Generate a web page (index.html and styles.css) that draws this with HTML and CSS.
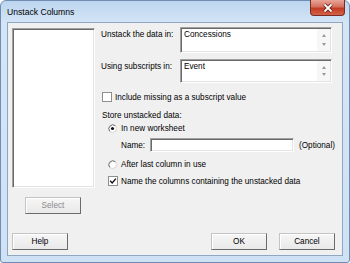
FILE: index.html
```html
<!DOCTYPE html>
<html lang="en">
  <head>
    <meta charset="UTF-8" />
    <meta name="viewport" content="width=device-width, initial-scale=1" />
    <title>Unstack Columns</title>
    <link rel="stylesheet" href="styles.css">
  </head>
  <body>
    <div class="window">
      <div class="titleBar">
        <span class="title">Unstack Columns</span>
        <span class="closeBtn">
          <svg width="12" height="10" viewBox="0 0 12 10">
            <path d="M2.5 1.5 L9.5 8.5 M9.5 1.5 L2.5 8.5" stroke="#5b1d14" stroke-width="3.4" fill="none" />
            <path d="M2.5 1.5 L9.5 8.5 M9.5 1.5 L2.5 8.5" stroke="#fff" stroke-width="1.8" fill="none" />
          </svg>
        </span>
      </div>

      <div class="client">
        <!-- left: column list -->
        <div class="leftPane">
          <div class="listBox"></div>
          <button class="btn selectBtn" type="button">Select</button>
        </div>

        <!-- right: options -->
        <div class="rightPane">
          <div class="fieldRow first">
            <span class="fieldLabel">Unstack the data in:</span>
            <div class="textArea tall">
              <span class="value">Concessions</span>
              <span class="spin"><i class="up"></i><i class="down"></i></span>
            </div>
          </div>

          <div class="fieldRow second">
            <span class="fieldLabel">Using subscripts in:</span>
            <div class="textArea">
              <span class="value">Event</span>
              <span class="spin"><i class="up"></i><i class="down"></i></span>
            </div>
          </div>

          <div class="optRow checkRow">
            <span class="checkBox"></span>
            <span>Include missing as a subscript value</span>
          </div>

          <div class="groupLabel">Store unstacked data:</div>

          <div class="optRow radioRow">
            <svg class="radio" width="9" height="9" viewBox="0 0 9 9">
              <circle cx="4.5" cy="4.5" r="4" fill="#fff" stroke="#d4d4d4" />
              <path d="M1.7 7.3 A4 4 0 0 1 7.3 1.7" stroke="#707070" fill="none" />
              <circle cx="4.5" cy="4.5" r="1.6" fill="#111" />
            </svg>
            <span>In new worksheet</span>
          </div>

          <div class="nameRow">
            <span class="nameLabel">Name:</span>
            <span class="nameBox"></span>
            <span class="optional">(Optional)</span>
          </div>

          <div class="optRow radioRow second">
            <svg class="radio" width="9" height="9" viewBox="0 0 9 9">
              <circle cx="4.5" cy="4.5" r="4" fill="#fff" stroke="#d4d4d4" />
              <path d="M1.7 7.3 A4 4 0 0 1 7.3 1.7" stroke="#707070" fill="none" />
            </svg>
            <span>After last column in use</span>
          </div>

          <div class="optRow checkRow lastCheck">
            <span class="checkBox">
              <svg width="8" height="8" viewBox="0 0 8 8">
                <path d="M1.2 3.8 L3.2 5.9 L6.9 1.6" stroke="#111" stroke-width="1.4" fill="none" />
              </svg>
            </span>
            <span>Name the columns containing the unstacked data</span>
          </div>
        </div>

        <!-- bottom buttons -->
        <div class="footer">
          <button class="btn" type="button">Help</button>
          <button class="btn okBtn" type="button">OK</button>
          <button class="btn" type="button">Cancel</button>
        </div>
      </div>
    </div>
  </body>
</html>
```

FILE: styles.css
```css
*,
*:before,
*:after {
  margin: 0;
  padding: 0;
  box-sizing: border-box;
}

body {
  background-color: #fff;
  font-family: "Liberation Sans", Arial, sans-serif;
  font-size: 8.2px;
  color: #000;
}

.window {
  width: 350px;
  height: 263px;
  display: flex;
  flex-direction: column;
  padding: 0 6px 6px 6px;
  background: linear-gradient(#bcd5ef, #d4e5f6 22px, #cfe1f4);
  border: 1px solid #6f8db2;
  border-radius: 6px 6px 3px 3px;
}

.titleBar {
  height: 21px;
  display: flex;
  align-items: center;
}

.title {
  font-size: 8.6px;
  color: #000;
}

.closeBtn {
  width: 35px;
  height: 16px;
  margin: -1px -2px 0 auto;
  align-self: flex-start;
  display: flex;
  align-items: center;
  justify-content: center;
  background: linear-gradient(#e9a597, #d3705f 45%, #c23b22 55%, #d4624a);
  border: 1px solid #7b2c20;
  border-top: 0;
  border-radius: 0 0 4px 4px;
}

.client {
  flex: 1;
  display: grid;
  grid-template-columns: 83px 1fr;
  grid-template-rows: auto auto;
  column-gap: 6px;
  padding: 5px 10px 0 4px;
  background-color: #f0f0f0;
  border: 1px solid #8ea7c3;
}

/* sunken boxes */
.listBox,
.textArea,
.nameBox {
  background-color: #fff;
  border: 1px solid;
  border-color: #a0a0a0 #fff #fff #a0a0a0;
  box-shadow: inset 1px 1px #696969, inset -1px -1px #e3e3e3;
}

.listBox {
  height: 160px;
}

.btn {
  width: 56px;
  height: 17px;
  display: block;
  font-family: "Liberation Sans", Arial, sans-serif;
  font-size: 8.2px;
  color: #000;
  background: linear-gradient(#f6f6f6, #e9e9e9);
  border: 1px solid;
  border-color: #c4c4c4 #6b6b6b #6b6b6b #c4c4c4;
  box-shadow: inset 1px 1px #fff;
}

.selectBtn {
  margin: 9px 0 0 13px;
  color: #8a8a8a;
}

.rightPane {
  display: flex;
  flex-direction: column;
}

.fieldRow {
  display: flex;
}

.fieldRow.first {
  margin-top: -1px;
}

.fieldRow.second {
  margin-top: 6px;
}

.fieldLabel {
  width: 79px;
  padding: 3px 0 0 0;
  line-height: 10px;
}

.textArea {
  width: 152px;
  height: 24px;
  display: flex;
}

.textArea.tall {
  height: 26px;
}

.textArea .value {
  padding: 2px 0 0 3px;
  line-height: 10px;
}

.spin {
  width: 13px;
  margin: 1px 1px 1px auto;
  display: flex;
  flex-direction: column;
  justify-content: space-evenly;
  align-items: center;
  background-color: #f7f7f7;
}

.spin i {
  width: 0;
  height: 0;
  border-left: 2.5px solid transparent;
  border-right: 2.5px solid transparent;
}

.spin .up {
  border-bottom: 3px solid #9a9a9a;
}

.spin .down {
  border-top: 3px solid #9a9a9a;
}

.optRow {
  height: 12px;
  display: flex;
  align-items: center;
}

.checkRow {
  margin-top: 8px;
  padding-left: 1px;
  gap: 3px;
}

.checkBox {
  width: 10px;
  height: 10px;
  display: flex;
  align-items: center;
  justify-content: center;
  background-color: #fff;
  border: 1px solid #8e8f8f;
}

.groupLabel {
  margin-top: 7px;
  padding-left: 1px;
  line-height: 12px;
}

.radioRow {
  padding-left: 7px;
  gap: 4px;
}

.radioRow.second {
  margin-top: 6px;
}

.nameRow {
  height: 14px;
  margin-top: 4px;
  padding-left: 20px;
  display: flex;
  align-items: center;
}

.nameLabel {
  width: 29px;
}

.nameBox {
  width: 144px;
  height: 14px;
}

.optional {
  margin-left: 5px;
}

.checkRow.lastCheck {
  margin-top: 5px;
  padding-left: 7px;
}

.footer {
  grid-column: 1 / -1;
  margin-top: 14px;
  display: flex;
  gap: 12px;
}

.okBtn {
  margin-left: auto;
}
```
